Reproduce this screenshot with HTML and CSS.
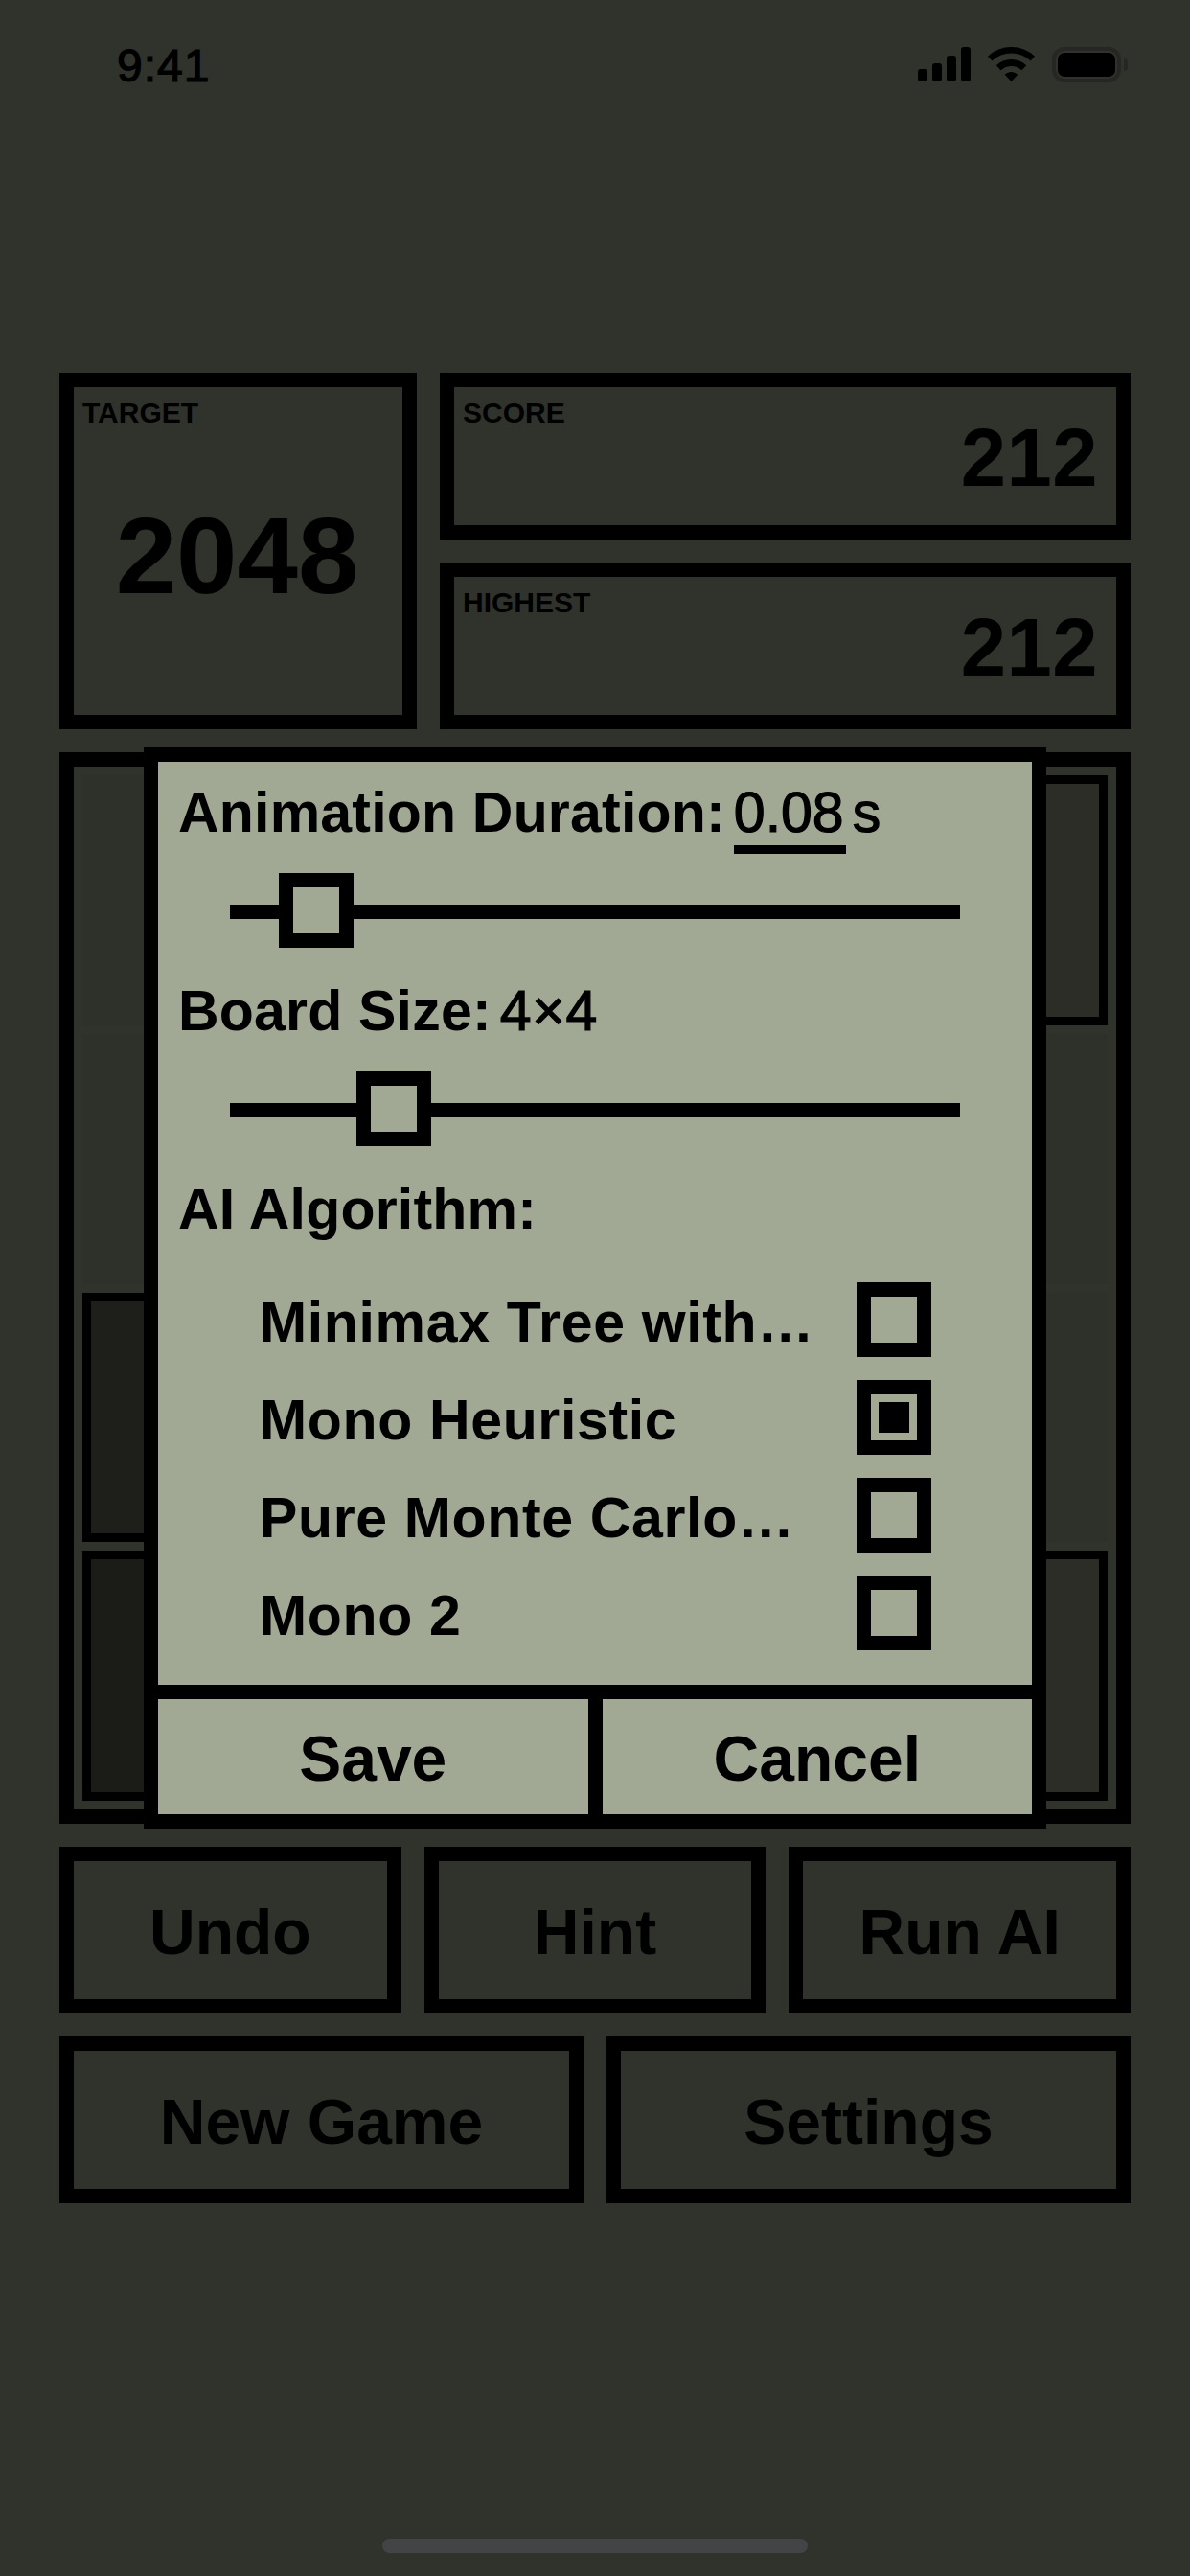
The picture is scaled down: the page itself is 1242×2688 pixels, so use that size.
FILE: index.html
```html
<!DOCTYPE html>
<html lang="en">
<head>
<meta charset="utf-8">
<title>2048</title>
<link rel="stylesheet" href="styles.css">
</head>
<body>
<div class="page">
  <header class="status">
    <span class="time">9:41</span>
    <div class="status-icons">
      <div class="signal"><i class="b1"></i><i class="b2"></i><i class="b3"></i><i class="b4"></i></div>
      <svg class="wifi" width="49" height="36" viewBox="0 0 49 36"><path d="M0 9.7A36 36 0 0 1 49 9.7L44.6 14.4A29.5 29.5 0 0 0 4.4 14.4Z"/><path d="M8.8 19.2A23 23 0 0 1 40.2 19.2L35.4 24.3A16 16 0 0 0 13.6 24.3Z"/><path d="M17.7 28.7A10 10 0 0 1 31.3 28.7L24.5 36Z"/></svg>
      <div class="battery"><div class="battery-body"><div class="battery-fill"></div></div><div class="battery-nub"></div></div>
    </div>
  </header>

  <section class="scores">
    <div class="box target"><div class="label">TARGET</div><div class="target-value">2048</div></div>
    <div class="box score"><div class="label">SCORE</div><div class="value">212</div></div>
    <div class="box highest"><div class="label">HIGHEST</div><div class="value">212</div></div>
  </section>

  <section class="board">
    <div class="cell"></div><div class="cell"></div><div class="cell"></div><div class="cell tile t2"></div>
    <div class="cell"></div><div class="cell"></div><div class="cell"></div><div class="cell"></div>
    <div class="cell tile t64"></div><div class="cell"></div><div class="cell"></div><div class="cell"></div>
    <div class="cell tile t128"></div><div class="cell"></div><div class="cell"></div><div class="cell tile t2"></div>
  </section>

  <section class="btn-row three">
    <div class="btn">Undo</div><div class="btn">Hint</div><div class="btn">Run AI</div>
  </section>
  <section class="btn-row two">
    <div class="btn">New Game</div><div class="btn">Settings</div>
  </section>
</div>

<div class="scrim"></div>
<div class="home-bar"></div>

<div class="dialog">
  <div class="dialog-body">
    <div class="line"><span class="line-label">Animation Duration:</span><span class="line-value underlined">0.08</span><span class="unit">s</span></div>
    <div class="slider"><div class="track"></div><div class="thumb thumb-duration"></div></div>
    <div class="line"><span class="line-label">Board Size:</span><span class="line-value">4×4</span></div>
    <div class="slider"><div class="track"></div><div class="thumb thumb-size"></div></div>
    <div class="line"><span class="line-label">AI Algorithm:</span></div>
    <div class="options">
      <div class="option"><span>Minimax Tree with…</span><div class="check"></div></div>
      <div class="option"><span>Mono Heuristic</span><div class="check on"></div></div>
      <div class="option"><span>Pure Monte Carlo…</span><div class="check"></div></div>
      <div class="option"><span>Mono 2</span><div class="check"></div></div>
    </div>
  </div>
  <div class="dialog-footer">
    <div class="dialog-btn">Save</div>
    <div class="dialog-btn">Cancel</div>
  </div>
</div>
</body>
</html>
```
FILE: styles.css
```css
* { box-sizing: border-box; }
html, body { margin: 0; padding: 0; }
body {
  width: 1242px;
  height: 2688px;
  position: relative;
  overflow: hidden;
  background: #a1a894;
  color: #000;
  font-family: "Liberation Sans", Arial, sans-serif;
  font-weight: 700;
}
.page { padding: 0 62px; }

/* status bar */
.status {
  height: 389px;
  position: relative;
  z-index: 3;
  margin: 0 -62px;
  padding: 49px 65px 0 122px;
  display: flex;
  justify-content: space-between;
  align-items: flex-start;
}
.time { font-size: 48px; line-height: 44px; font-weight: 400; letter-spacing: 1px; -webkit-text-stroke: 1.2px #000; margin-top: -2px; }
.status-icons { display: flex; align-items: flex-start; gap: 18px; }
.signal { display: flex; align-items: flex-end; gap: 5.5px; height: 36px; width: 55px; }
.signal i { display: block; width: 9.6px; background: #000; border-radius: 3px; }
.signal .b1 { height: 13px; }
.signal .b2 { height: 19px; }
.signal .b3 { height: 27px; }
.signal .b4 { height: 36px; }
.wifi { display: block; fill: #000; }
.battery { display: flex; align-items: center; gap: 3px; }
.battery-body {
  width: 72px; height: 37px; padding: 2px;
  border: 4px solid #262724; border-radius: 13px;
}
.battery-fill { width: 100%; height: 100%; background: #000; border-radius: 7px; }
.battery-nub { width: 4px; height: 13px; background: #262724; border-radius: 0 4px 4px 0; }

/* scores */
.scores {
  display: grid;
  grid-template-columns: 373px 721px;
  grid-template-rows: 174px 174px;
  gap: 24px;
}
.box { border: 15px solid #000; padding: 10px 7px 0 9px; }
.target { grid-row: 1 / 3; }
.label { font-size: 30px; line-height: 34px; }
.value { font-size: 85px; line-height: 84px; letter-spacing: 0.5px; text-align: right; margin-top: -12px; padding-right: 12px; }
.target-value { font-size: 114px; line-height: 120px; text-align: center; margin-top: 72px; padding-right: 4px; }

/* board */
.board {
  margin-top: 24px;
  width: 1118px; height: 1118px;
  border: 15px solid #000;
  padding: 9px;
  display: grid;
  grid-template-columns: repeat(4, 1fr);
  grid-template-rows: repeat(4, 1fr);
  gap: 9px;
}
.cell { background: #99a38c; }
.tile { border: 9px solid #000; }
.t2 { background: #969682; }
.t64 { background: #646757; }
.t128 { background: #5a5a50; }

/* action buttons */
.btn-row { display: grid; gap: 24px; margin-top: 24px; }
.three { grid-template-columns: repeat(3, 1fr); }
.two { grid-template-columns: repeat(2, 1fr); }
.btn {
  height: 174px;
  border: 15px solid #000;
  padding-top: 3px;
  display: flex; align-items: center; justify-content: center;
  font-size: 66px;
}

/* overlay */
.scrim { position: absolute; inset: 0; background: rgba(0, 0, 0, 0.7); z-index: 1; }
.home-bar {
  position: absolute; z-index: 2;
  left: 399px; top: 2649px; width: 444px; height: 15px;
  border-radius: 8px; background: #434445;
}

/* dialog */
.dialog {
  position: absolute; z-index: 4;
  left: 150px; top: 780px; width: 942px; height: 1128px;
  border: 15px solid #000;
  background: #a1a894;
  display: flex; flex-direction: column;
  font-size: 59px;
}
.dialog-body { flex: 1; padding: 17px 0 0 21px; }
.line { display: flex; height: 72px; line-height: 72px; white-space: nowrap; }
.line-label { letter-spacing: 0.2px; }
.line-value { margin-left: 9px; font-weight: 400; letter-spacing: 0.7px; -webkit-text-stroke: 1.2px #000; }
.underlined { letter-spacing: 0; padding-right: 2px; height: 79px; border-bottom: 9px solid #000; }
.unit { margin-left: 7px; font-weight: 400; -webkit-text-stroke: 1.2px #000; }
.slider { position: relative; height: 78px; margin: 27px 0 30px 54px; width: 762px; }
.track { height: 15px; margin-top: 33px; background: #000; position: absolute; left: 0; right: 0; }
.thumb {
  position: absolute; top: 0; width: 78px; height: 78px;
  border: 15px solid #000; background: #a1a894;
}
.thumb-duration { left: 51px; }
.thumb-size { left: 132px; }
.options { margin-top: 40px; display: flex; flex-direction: column; gap: 24px; padding: 0 105px 0 85px; letter-spacing: 0.65px; }
.option { display: flex; justify-content: space-between; align-items: center; height: 78px; white-space: nowrap; }
.option span { padding-top: 5px; }
.check {
  width: 78px; height: 78px; border: 15px solid #000;
  display: flex; align-items: center; justify-content: center;
}
.check.on::after { content: ""; width: 32px; height: 32px; background: #000; }
.dialog-footer { height: 135px; border-top: 15px solid #000; display: flex; font-size: 66px; }
.dialog-btn { flex: 1; display: flex; align-items: center; justify-content: center; padding-top: 4px; }
.dialog-btn + .dialog-btn { border-left: 15px solid #000; }
```
